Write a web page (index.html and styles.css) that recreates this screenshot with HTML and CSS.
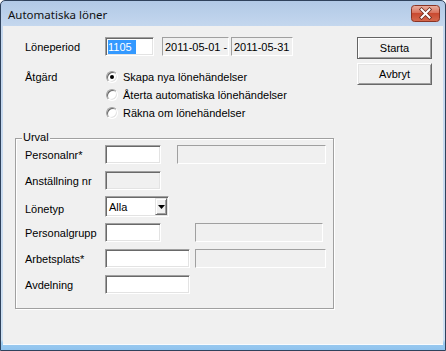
FILE: index.html
```html
<!DOCTYPE html>
<html>
<head>
<meta charset="utf-8">
<title>Automatiska löner</title>
<link rel="stylesheet" href="styles.css">
</head>
<body>
<div class="window">
  <div class="titlebar">
    <span class="title">Automatiska löner</span>
    <div class="close">
      <svg width="29" height="17" viewBox="0 0 29 17">
        <defs>
          <linearGradient id="cg" x1="0" y1="0" x2="0" y2="1">
            <stop offset="0" stop-color="#eab2a4"/>
            <stop offset="0.45" stop-color="#d9735d"/>
            <stop offset="0.5" stop-color="#c94a31"/>
            <stop offset="1" stop-color="#d56a4e"/>
          </linearGradient>
        </defs>
        <rect x="0.5" y="0.5" width="28" height="16" rx="3" fill="url(#cg)" stroke="#8a3424"/>
        <path d="M10.5 4.5 L18.5 12.5 M18.5 4.5 L10.5 12.5" stroke="#6b2a1c" stroke-width="3.6" stroke-linecap="square"/>
        <path d="M10.5 4.5 L18.5 12.5 M18.5 4.5 L10.5 12.5" stroke="#ffffff" stroke-width="2" stroke-linecap="square"/>
      </svg>
    </div>
  </div>
  <div class="client">
    <div class="main">
      <div class="row period">
        <span class="label">Löneperiod</span>
        <div class="field input w49"><span class="sel">1105</span></div>
        <div class="field static w67 ml8">2011-05-01 -</div>
        <div class="field static w62 ml2">2011-05-31</div>
      </div>
      <div class="row action">
        <span class="label">Åtgärd</span>
        <div class="radios">
          <div class="radio"><span class="dot checked"></span>Skapa nya lönehändelser</div>
          <div class="radio"><span class="dot"></span>Återta automatiska lönehändelser</div>
          <div class="radio"><span class="dot"></span>Räkna om lönehändelser</div>
        </div>
      </div>
      <div class="group">
        <span class="group-title">Urval</span>
        <div class="grow">
          <span class="label">Personalnr*</span>
          <div class="field input w56"></div>
          <div class="field static w149 ml16"></div>
        </div>
        <div class="grow">
          <span class="label">Anställning nr</span>
          <div class="field input disabled w56"></div>
        </div>
        <div class="grow">
          <span class="label lower">Lönetyp</span>
          <div class="select">
            <span class="select-text">Alla</span>
            <span class="arrow">
              <svg width="7" height="4" viewBox="0 0 7 4"><polygon points="0,0 7,0 3.5,4" fill="#000"/></svg>
            </span>
          </div>
        </div>
        <div class="grow">
          <span class="label">Personalgrupp</span>
          <div class="field input w56"></div>
          <div class="field static w128 ml34"></div>
        </div>
        <div class="grow">
          <span class="label">Arbetsplats*</span>
          <div class="field input w85"></div>
          <div class="field static w131 ml5"></div>
        </div>
        <div class="grow">
          <span class="label">Avdelning</span>
          <div class="field input w85"></div>
        </div>
      </div>
    </div>
    <div class="buttons">
      <div class="btn default">Starta</div>
      <div class="btn">Avbryt</div>
    </div>
  </div>
</div>
</body>
</html>
```

FILE: styles.css
```css
html, body {
  margin: 0;
  padding: 0;
  background: #ffffff;
}

body {
  font-family: "Liberation Sans", Arial, sans-serif;
  font-size: 11px;
  color: #000;
}

.window {
  width: 446px;
  height: 351px;
  box-sizing: border-box;
  border: 1px solid #2f425c;
  border-radius: 5px 5px 0 0;
  padding: 0 2px;
  display: flex;
  flex-direction: column;
  background: linear-gradient(to bottom, #b1c9e6 0px, #c4d7ee 25px, #c9dbf0 60%, #cfe1f3 97%, #9ccbf0 98%, #8fc3ee 100%);
}

.titlebar {
  height: 25px;
  flex: none;
  display: flex;
  align-items: center;
  padding-left: 5px;
}

.title {
  font-family: "Noto Sans", "Open Sans", sans-serif;
  font-size: 11.5px;
  color: #111;
  padding-top: 1px;
}

.close {
  margin-left: auto;
  margin-right: 3px;
  height: 17px;
  display: flex;
}

.client {
  height: 318px;
  flex: none;
  background: #f0f0f0;
  display: flex;
  box-shadow: 0 1px 0 #f8fbfe;
}

.main {
  flex: 1;
  padding: 11px 0 0 12px;
}

.row {
  display: flex;
  align-items: center;
  margin-left: 10px;
}

.period {
  height: 19px;
}

.label {
  width: 80px;
  flex: none;
  white-space: nowrap;
}

.lower {
  padding-top: 4px;
}

.action {
  margin-top: 12px;
  align-items: flex-start;
}

.action .label {
  line-height: 18px;
}

.radios {
  display: flex;
  flex-direction: column;
}

.radio {
  height: 18px;
  display: flex;
  align-items: center;
  white-space: nowrap;
}

.dot {
  width: 12px;
  height: 12px;
  box-sizing: border-box;
  border-radius: 50%;
  background: #fff;
  border: 1px solid;
  border-color: #a0a0a0 #ffffff #ffffff #a0a0a0;
  box-shadow: inset 1px 1px 0 #696969, inset -1px -1px 0 #e3e3e3;
  margin-left: 1px;
  margin-right: 5px;
  display: flex;
  align-items: center;
  justify-content: center;
}

.dot.checked::after {
  content: "";
  width: 4px;
  height: 4px;
  border-radius: 50%;
  background: #000;
}

.field {
  height: 19px;
  box-sizing: border-box;
  flex: none;
  display: flex;
  align-items: center;
  white-space: nowrap;
  border: 1px solid;
  border-color: #a0a0a0 #ffffff #ffffff #a0a0a0;
}

.input {
  background: #fff;
  box-shadow: inset 1px 1px 0 #696969, inset -1px -1px 0 #e3e3e3;
  padding-left: 1px;
}

.input.disabled {
  background: #f0f0f0;
}

.static {
  background: #f0f0f0;
  padding-left: 2px;
}

.sel {
  background: #3399ff;
  color: #fff;
  height: 14px;
  line-height: 14px;
  padding-right: 4px;
  margin-left: 1px;
}

.w49 { width: 49px; }
.w56 { width: 56px; }
.w62 { width: 62px; }
.w67 { width: 67px; }
.w85 { width: 85px; }
.w128 { width: 128px; }
.w131 { width: 131px; }
.w149 { width: 149px; }
.ml2 { margin-left: 2px; }
.ml5 { margin-left: 5px; }
.ml8 { margin-left: 8px; }
.ml16 { margin-left: 16px; }
.ml34 { margin-left: 34px; }

.group {
  position: relative;
  margin-top: 16px;
  width: 319px;
  height: 171px;
  box-sizing: border-box;
  border: 1px solid #a0a0a0;
  box-shadow: 1px 1px 0 #ffffff, inset 1px 1px 0 #ffffff;
  padding: 6px 0 0 9px;
  display: grid;
  grid-auto-rows: 19px;
  row-gap: 7px;
  align-content: start;
}

.group-title {
  position: absolute;
  top: -8px;
  left: 6px;
  padding: 0 1px;
  background: #f0f0f0;
  line-height: 13px;
}

.grow {
  display: flex;
  align-items: center;
}

.select {
  width: 64px;
  height: 21px;
  box-sizing: border-box;
  background: #fff;
  border: 1px solid;
  border-color: #a0a0a0 #ffffff #ffffff #a0a0a0;
  box-shadow: inset 1px 1px 0 #696969, inset -1px -1px 0 #e3e3e3;
  padding: 2px 1px 2px 2px;
  display: flex;
  align-items: center;
}

.select-text {
  flex: 1;
  padding-left: 1px;
}

.arrow {
  width: 12px;
  height: 17px;
  box-sizing: border-box;
  background: #f0f0f0;
  border: 1px solid;
  border-color: #e3e3e3 #696969 #696969 #e3e3e3;
  box-shadow: inset 1px 1px 0 #ffffff, inset -1px -1px 0 #a0a0a0;
  display: flex;
  align-items: center;
  justify-content: center;
}

.arrow svg {
  display: block;
}

.buttons {
  width: 75px;
  flex: none;
  margin-right: 11px;
  padding-top: 11px;
  display: flex;
  flex-direction: column;
  gap: 4px;
}

.btn {
  height: 22px;
  box-sizing: border-box;
  background: #f0f0f0;
  display: flex;
  align-items: center;
  justify-content: center;
  border: 1px solid;
  border-color: #ffffff #696969 #696969 #ffffff;
  box-shadow: inset 1px 1px 0 #e3e3e3, inset -1px -1px 0 #a0a0a0;
}

.btn.default {
  border-color: #646464;
  box-shadow: inset 1px 1px 0 #ffffff, inset -1px -1px 0 #a0a0a0;
}
```
